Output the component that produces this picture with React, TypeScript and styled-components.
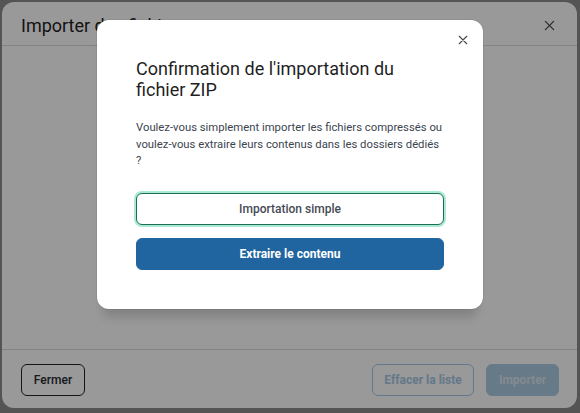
import styled, { createGlobalStyle } from 'styled-components';

const GlobalStyle = createGlobalStyle`
  html,
  body {
    margin: 0;
    padding: 0;
    background: #8c8c8c;
  }

  * {
    box-sizing: border-box;
  }

  body {
    font-family: Roboto, 'Liberation Sans', Arial, sans-serif;
  }
`;

const Page = styled.div`
  position: relative;
  width: 580px;
  height: 413px;
  padding: 2px 3px 5px 2px;
  overflow: hidden;
`;

const ImportDialog = styled.section`
  display: flex;
  flex-direction: column;

  width: 575px;
  height: 406px;
  border-radius: 12px;

  background: #ffffff;
`;

const DialogHeader = styled.header`
  display: flex;
  align-items: center;
  justify-content: space-between;

  height: 44px;
  padding: 4px 18px 0 19px;
  border-bottom: 1px solid #d8dce0;

  h2 {
    margin: 0;

    font-weight: 400;
    font-size: 18px;
    color: #1f1f1f;
  }
`;

const DialogBody = styled.div`
  flex: 1;
`;

const DialogFooter = styled.footer`
  display: flex;
  align-items: center;
  gap: 12px;

  height: 59px;
  padding: 2px 18px 0 19px;
  border-top: 1px solid #d8dce0;

  .spacer {
    flex: 1;
  }
`;

const CloseButton = styled.button<{ size: number }>`
  display: flex;
  align-items: center;
  justify-content: center;

  width: 20px;
  height: 20px;
  padding: 0;
  border: none;

  background: transparent;
  color: #444a52;

  svg {
    width: ${({ size }) => size}px;
    height: ${({ size }) => size}px;
  }
`;

const FooterButton = styled.button<{ variant: 'dark' | 'outline' | 'filled'; w: number }>`
  width: ${({ w }) => w}px;
  height: 32px;
  border-radius: 6px;

  font-family: inherit;
  font-size: 12px;

  border: 1px solid
    ${({ variant }) => (variant === 'dark' ? '#1e2227' : variant === 'outline' ? '#a6c9e6' : '#abcbe2')};
  background: ${({ variant }) => (variant === 'filled' ? '#abcbe2' : 'transparent')};
  color: ${({ variant }) => (variant === 'dark' ? '#282c31' : variant === 'outline' ? '#a6c9e6' : '#dce7f0')};
  font-weight: ${({ variant }) => (variant === 'dark' ? 500 : 700)};
`;

const Overlay = styled.div`
  position: absolute;
  inset: 0;

  display: flex;
  justify-content: center;
  align-items: flex-start;

  padding-top: 20px;

  background: rgba(0, 0, 0, 0.4);
`;

const ConfirmDialog = styled.div`
  position: relative;

  width: 386px;
  height: 289px;
  padding: 38px 39px 39px;
  border-radius: 12px;

  background: #ffffff;
  box-shadow:
    0 0 0 1px rgba(0, 0, 0, 0.06),
    0 14px 10px -6px rgba(0, 0, 0, 0.15);

  h3 {
    margin: 0 0 20px;

    font-weight: 400;
    font-size: 18px;
    line-height: 21px;
    color: #1f1f1f;
  }

  p {
    margin: 0 -12px 23px 0;

    font-size: 11.3px;
    line-height: 16.5px;
    color: #3c4450;
  }

  .close {
    position: absolute;
    top: 10px;
    right: 10px;
  }
`;

const Actions = styled.div`
  display: flex;
  flex-direction: column;
  gap: 13px;
`;

const ChoiceButton = styled.button<{ primary?: boolean }>`
  width: 100%;
  height: 32px;
  border-radius: 6px;

  font-family: inherit;
  font-size: 12px;
  font-weight: ${({ primary }) => (primary ? 700 : 500)};

  border: 1px solid ${({ primary }) => (primary ? '#2065a0' : '#1e6e52')};
  background: ${({ primary }) => (primary ? '#2065a0' : '#ffffff')};
  color: ${({ primary }) => (primary ? '#ffffff' : '#454b55')};
  box-shadow: ${({ primary }) => (primary ? 'none' : '0 0 0 2px #a9e9d6')};
`;

const Cross = () => (
  <svg viewBox='0 0 12 12' fill='none' stroke='currentColor' strokeWidth='1.4' strokeLinecap='round'>
    <path d='M1.5 1.5 10.5 10.5M10.5 1.5 1.5 10.5' />
  </svg>
);

export default function App() {
  return (
    <>
      <GlobalStyle />
      <Page>
        <ImportDialog>
          <DialogHeader>
            <h2>Importer des fichiers</h2>
            <CloseButton size={11} type='button'>
              <Cross />
            </CloseButton>
          </DialogHeader>
          <DialogBody />
          <DialogFooter>
            <FooterButton variant='dark' w={64} type='button'>
              Fermer
            </FooterButton>
            <div className='spacer' />
            <FooterButton variant='outline' w={102} type='button'>
              Effacer la liste
            </FooterButton>
            <FooterButton variant='filled' w={73} type='button'>
              Importer
            </FooterButton>
          </DialogFooter>
        </ImportDialog>

        <Overlay>
          <ConfirmDialog>
            <CloseButton className='close' size={10} type='button'>
              <Cross />
            </CloseButton>
            <h3>Confirmation de l'importation du fichier ZIP</h3>
            <p>
              Voulez-vous simplement importer les fichiers compressés ou
              <br />
              voulez-vous extraire leurs contenus dans les dossiers dédiés
              <br />?
            </p>
            <Actions>
              <ChoiceButton type='button'>Importation simple</ChoiceButton>
              <ChoiceButton primary type='button'>
                Extraire le contenu
              </ChoiceButton>
            </Actions>
          </ConfirmDialog>
        </Overlay>
      </Page>
    </>
  );
}
